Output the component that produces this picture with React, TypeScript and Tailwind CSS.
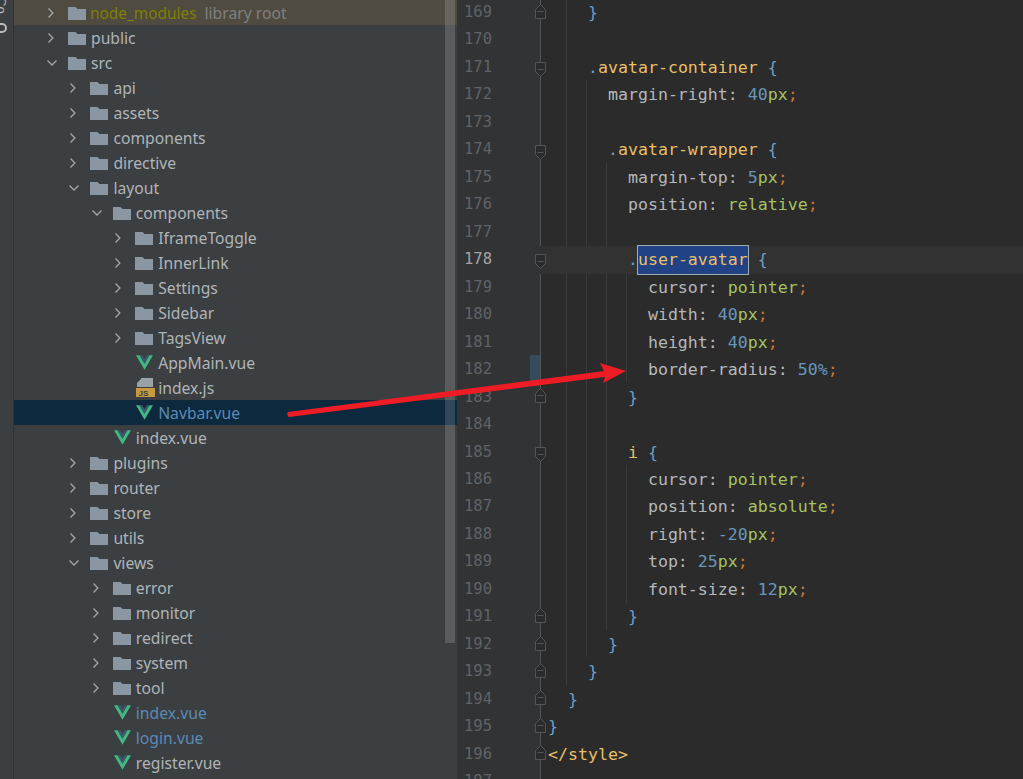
import React from 'react';

type Kind = 'closed' | 'open' | 'vue' | 'js';
type Node = { name: string; level: number; kind: Kind; tone?: string };

const tree: Node[] = [
  { name: 'public', level: 0, kind: 'closed' },
  { name: 'src', level: 0, kind: 'open' },
  { name: 'api', level: 1, kind: 'closed' },
  { name: 'assets', level: 1, kind: 'closed' },
  { name: 'components', level: 1, kind: 'closed' },
  { name: 'directive', level: 1, kind: 'closed' },
  { name: 'layout', level: 1, kind: 'open' },
  { name: 'components', level: 2, kind: 'open' },
  { name: 'IframeToggle', level: 3, kind: 'closed' },
  { name: 'InnerLink', level: 3, kind: 'closed' },
  { name: 'Settings', level: 3, kind: 'closed' },
  { name: 'Sidebar', level: 3, kind: 'closed' },
  { name: 'TagsView', level: 3, kind: 'closed' },
  { name: 'AppMain.vue', level: 3, kind: 'vue' },
  { name: 'index.js', level: 3, kind: 'js' },
  { name: 'Navbar.vue', level: 3, kind: 'vue', tone: 'selected' },
  { name: 'index.vue', level: 2, kind: 'vue' },
  { name: 'plugins', level: 1, kind: 'closed' },
  { name: 'router', level: 1, kind: 'closed' },
  { name: 'store', level: 1, kind: 'closed' },
  { name: 'utils', level: 1, kind: 'closed' },
  { name: 'views', level: 1, kind: 'open' },
  { name: 'error', level: 2, kind: 'closed' },
  { name: 'monitor', level: 2, kind: 'closed' },
  { name: 'redirect', level: 2, kind: 'closed' },
  { name: 'system', level: 2, kind: 'closed' },
  { name: 'tool', level: 2, kind: 'closed' },
  { name: 'index.vue', level: 2, kind: 'vue', tone: 'modified' },
  { name: 'login.vue', level: 2, kind: 'vue', tone: 'modified' },
  { name: 'register.vue', level: 2, kind: 'vue' },
];

// token colours
const S = 'text-[#e8bf6a]'; // selector
const P = 'text-[#b4b8bc]'; // property
const B = 'text-[#6c9fc9]'; // brace
const N = 'text-[#6897bb]'; // number
const G = 'text-[#a5c261]'; // value
const O = 'text-[#cc7832]'; // semicolon

type Tok = [string, string];
type Fold = 'none' | 'open' | 'close';
type Line = { no: number; fold: Fold; toks: Tok[] };

const prop = (indent: number, name: string, value: Tok[]): Tok[] => [
  [P, ' '.repeat(indent) + name + ': '],
  ...value,
  [O, ';'],
];
const px = (n: string): Tok[] => [[N, n], [G, 'px']];

const lines: Line[] = [
  { no: 169, fold: 'close', toks: [[B, '    }']] },
  { no: 170, fold: 'none', toks: [] },
  { no: 171, fold: 'open', toks: [[B, '    .'], [S, 'avatar-container'], [B, ' {']] },
  { no: 172, fold: 'none', toks: prop(6, 'margin-right', px('40')) },
  { no: 173, fold: 'none', toks: [] },
  { no: 174, fold: 'open', toks: [[B, '      .'], [S, 'avatar-wrapper'], [B, ' {']] },
  { no: 175, fold: 'none', toks: prop(8, 'margin-top', px('5')) },
  { no: 176, fold: 'none', toks: prop(8, 'position', [[G, 'relative']]) },
  { no: 177, fold: 'none', toks: [] },
  { no: 178, fold: 'open', toks: [] },
  { no: 179, fold: 'none', toks: prop(10, 'cursor', [[G, 'pointer']]) },
  { no: 180, fold: 'none', toks: prop(10, 'width', px('40')) },
  { no: 181, fold: 'none', toks: prop(10, 'height', px('40')) },
  { no: 182, fold: 'none', toks: prop(10, 'border-radius', [[N, '50'], [N, '%']]) },
  { no: 183, fold: 'close', toks: [[B, '        }']] },
  { no: 184, fold: 'none', toks: [] },
  { no: 185, fold: 'open', toks: [[S, '        i'], [B, ' {']] },
  { no: 186, fold: 'none', toks: prop(10, 'cursor', [[G, 'pointer']]) },
  { no: 187, fold: 'none', toks: prop(10, 'position', [[G, 'absolute']]) },
  { no: 188, fold: 'none', toks: prop(10, 'right', [[N, '-20'], [G, 'px']]) },
  { no: 189, fold: 'none', toks: prop(10, 'top', px('25')) },
  { no: 190, fold: 'none', toks: prop(10, 'font-size', px('12')) },
  { no: 191, fold: 'close', toks: [[B, '        }']] },
  { no: 192, fold: 'close', toks: [[B, '      }']] },
  { no: 193, fold: 'close', toks: [[B, '    }']] },
  { no: 194, fold: 'close', toks: [[B, '  }']] },
  { no: 195, fold: 'close', toks: [[B, '}']] },
  { no: 196, fold: 'close', toks: [[S, '</style>']] },
  { no: 197, fold: 'none', toks: [] },
];

const Chevron = ({ open }: { open: boolean }) => (
  <svg width="12" height="12" viewBox="0 0 12 12" fill="none" stroke="#a4a7a9" strokeWidth="1.3" className="mt-px shrink-0">
    <path d={open ? 'M2.5 3.5 L7 8 L11.5 3.5' : 'M3.5 1.5 L7.9 6 L3.5 10.5'} />
  </svg>
);

const Folder = () => (
  <svg width="18" height="13" viewBox="0 0 18 13" className="mt-px shrink-0">
    <path d="M0 0 H7.5 L9.5 2 H18 V13 H0 Z" fill="#8a97a3" />
  </svg>
);

const VueIcon = () => (
  <svg width="17" height="15" viewBox="0 0 19 16" className="ml-[1px] shrink-0">
    <path d="M0 0 H4 L9.5 9.5 L15 0 H19 L9.5 16 Z" fill="#41b883" />
    <path d="M4 0 H7 L9.5 4.5 L12 0 H15 L9.5 9.5 Z" fill="#3d5a6c" />
  </svg>
);

const JsIcon = () => (
  <svg width="19" height="19" viewBox="0 0 19 19" className="ml-px shrink-0">
    <path d="M5 0 H17 V9 H5 Z M1 5 L5 1 V9 H1 Z" fill="#9aa2a8" />
    <rect x="0" y="10" width="19" height="9" fill="#c69a3e" />
    <text x="2.5" y="18" fontSize="8" fontWeight="700" fontFamily="'Liberation Sans', sans-serif" fill="#3c3f41">JS</text>
  </svg>
);

const FoldMark = ({ kind }: { kind: Fold }) => {
  if (kind === 'none') return null;
  return (
    <svg
      width="13"
      height="17"
      viewBox="0 0 13 17"
      fill="#2b2b2b"
      stroke="#525456"
      className={`absolute left-[77px] ${kind === 'open' ? 'mt-[4px]' : '-mt-[3px]'}`}
    >
      <path d={kind === 'open' ? 'M1.5 1.5 H11.5 V10.5 L6.5 15.5 L1.5 10.5 Z' : 'M1.5 15.5 H11.5 V6.5 L6.5 1.5 L1.5 6.5 Z'} />
      <path d="M3.5 8.5 H9.5" />
    </svg>
  );
};

const TreeRow = ({ node }: { node: Node }) => {
  const isFolder = node.kind === 'closed' || node.kind === 'open';
  const text =
    node.tone === 'selected' || node.tone === 'modified' ? 'text-[#5a8ab5]' : 'text-[#afb4b8]';
  return (
    <div
      className={`flex h-[25px] items-center ${node.tone === 'selected' ? 'bg-[#0d293e]' : ''}`}
      style={{ paddingLeft: 31 + node.level * 22.4 }}
    >
      <div className="flex w-[23px] shrink-0 justify-start">{isFolder && <Chevron open={node.kind === 'open'} />}</div>
      <div className="flex w-[23px] shrink-0 items-center">
        {isFolder && <Folder />}
        {node.kind === 'vue' && <VueIcon />}
        {node.kind === 'js' && <JsIcon />}
      </div>
      <span className={`mt-[2px] ${text}`}>{node.name}</span>
    </div>
  );
};

export default function App() {
  return (
    <div className="relative flex h-[779px] w-[1023px] overflow-hidden bg-[#2b2b2b]">
      {/* left tool stripe */}
      <div className="relative w-[14px] shrink-0 overflow-hidden border-r border-[#323232] bg-[#3c3f41]">
        <span className="absolute left-[8px] -top-[3px] origin-top-left rotate-90 font-['Liberation_Sans',sans-serif] text-[13px] leading-none text-[#bbbbbb]">
          Co
        </span>
        <div className="absolute -left-[5px] top-[23px] h-[10px] w-[12px] rounded-full border-2 border-[#bbbbbb]" />
      </div>

      {/* project tree */}
      <div className="relative w-[443px] shrink-0 overflow-hidden bg-[#3c3f41] font-['Noto_Sans',sans-serif] text-[15.7px]">
        <div className="flex h-[25px] items-center bg-[#4f4b41] pl-[31px]">
          <div className="flex w-[23px] shrink-0">
            <Chevron open={false} />
          </div>
          <div className="flex w-[22px] shrink-0 items-center">
            <Folder />
          </div>
          <span className="mt-[2px] text-[15.4px] text-[#808000]">node_modules</span>
          <span className="ml-2 mt-[2px] text-[#7f7f7f]">library root</span>
        </div>
        {tree.map((node, i) => (
          <TreeRow key={i} node={node} />
        ))}
        {/* scrollbar */}
        <div className="absolute right-[2px] top-0 h-[643px] w-[10px] bg-white/15" />
      </div>

      {/* editor */}
      <div className="relative min-w-0 flex-1 font-['DejaVu_Sans_Mono',monospace] text-[16.6px] leading-[27.48px]">
        <div className="absolute bottom-0 left-0 top-0 w-[83px] bg-[#313335]" />
        <div className="absolute bottom-0 left-[83px] top-0 w-px bg-[#555555]" />
        <div className="absolute left-[73px] top-[355px] h-[28px] w-[10px] bg-[#374b5f]" />

        {/* indent guides */}
        <div className="absolute left-[109px] top-0 h-[685px] w-px bg-[#3b3b3b]" />
        <div className="absolute left-[129px] top-[80px] h-[577px] w-px bg-[#3b3b3b]" />
        <div className="absolute left-[149px] top-[163px] h-[467px] w-px bg-[#3b3b3b]" />
        <div className="absolute left-[169px] top-[272px] h-[110px] w-px bg-[#3b3b3b]" />
        <div className="absolute left-[169px] top-[465px] h-[138px] w-px bg-[#3b3b3b]" />

        <div className="relative -mt-px">
          {lines.map((line) => (
            <div
              key={line.no}
              className={`relative flex h-[27.48px] items-center whitespace-pre ${line.no === 178 ? 'bg-[linear-gradient(90deg,transparent_83px,#323232_83px)]' : ''}`}
            >
              <span
                className={`w-[35px] shrink-0 text-right text-[15.5px] ${line.no === 178 ? 'text-[#a4a3a3]' : 'text-[#606366]'}`}
              >
                {line.no}
              </span>
              <FoldMark kind={line.fold} />
              <span className="ml-[56px]">
                {line.no === 178 ? (
                  <>
                    <span className={B}>{'        .'}</span>
                    <span className={`${S} -mx-px -my-px inline-block border border-[#a0adb0] bg-[#214283]`}>user-avatar</span>
                    <span className={B}> {'{'}</span>
                  </>
                ) : (
                  line.toks.map(([cls, txt], i) => (
                    <span key={i} className={cls}>
                      {txt}
                    </span>
                  ))
                )}
              </span>
            </div>
          ))}
        </div>
      </div>

      {/* red arrow annotation */}
      <svg className="absolute left-0 top-0" width="1023" height="779" viewBox="0 0 1023 779">
        <path d="M288 412 L604 371 L600 363 L626 371 L603 383 L605 377 L289 417 Q286 415 288 412 Z" fill="#ee1c25" />
      </svg>
    </div>
  );
}
